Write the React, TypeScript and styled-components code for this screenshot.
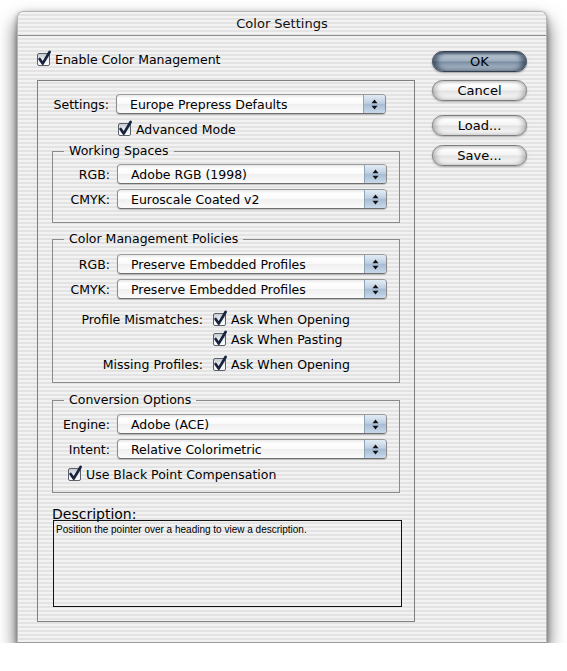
import React from 'react';
import styled, { createGlobalStyle, css } from 'styled-components';

const GlobalStyle = createGlobalStyle`
  html, body {
    margin: 0;
    background: #ffffff;
  }
  body {
    font-family: 'DejaVu Sans', 'Liberation Sans', sans-serif;
    font-size: 12.5px;
    color: #000;
  }
`;

const pinstripe = css`
  background: repeating-linear-gradient(
    to bottom,
    #f2f2f2 0px,
    #f2f2f2 2px,
    #e3e3e3 2px,
    #e3e3e3 4px
  );
`;

const Window = styled.div`
  margin: 11px 0 0 17px;
  width: 530px;
  height: 632px;
  box-sizing: border-box;
  border-radius: 6px 6px 0 0;
  border: 1px solid #b4b4b4;
  border-bottom-color: #9a9a9a;
  ${pinstripe}
  box-shadow: 0 10px 18px rgba(0, 0, 0, 0.7), 0 2px 5px rgba(0, 0, 0, 0.35);
  display: flex;
  flex-direction: column;
`;

const TitleBar = styled.div`
  height: 23px;
  flex: none;
  border-bottom: 1px solid #8e8e8e;
  display: flex;
  align-items: center;
  justify-content: center;
  font-size: 13px;
  color: #111;
`;

const Body = styled.div`
  display: flex;
  gap: 17px;
  padding: 15px 19px 0 19px;
`;

const LeftColumn = styled.div`
  width: 378px;
  display: flex;
  flex-direction: column;
`;

const ButtonColumn = styled.div`
  width: 95px;
  display: flex;
  flex-direction: column;
`;

const CheckRow = styled.label<{ $indent?: number; $top?: number }>`
  display: flex;
  align-items: center;
  gap: 4px;
  height: 14px;
  margin-left: ${p => p.$indent ?? 0}px;
  margin-top: ${p => p.$top ?? 0}px;
  white-space: nowrap;
`;

const MainBox = styled.div`
  margin-top: 14px;
  border: 1px solid #808080;
  padding: 13px 14px 14px 14px;
  display: flex;
  flex-direction: column;
`;

const FieldRow = styled.div`
  display: grid;
  grid-template-columns: 57px 270px;
  column-gap: 7px;
  align-items: center;
`;

const Label = styled.span`
  text-align: right;
  white-space: nowrap;
`;

const Group = styled.fieldset<{ $top: number; $bottom: number }>`
  margin: ${p => p.$top}px 0 0 0;
  padding: 0 0 ${p => p.$bottom}px 0;
  border: 1px solid #8a8a8a;
  min-width: 0;
`;

const Legend = styled.legend`
  margin-left: 11px;
  padding: 0 5px;
  line-height: 16px;
  font-size: 12.5px;
`;

const Stack = styled.div<{ $top: number; $gap: number }>`
  display: flex;
  flex-direction: column;
  gap: ${p => p.$gap}px;
  padding-top: ${p => p.$top}px;
`;

const Popup = styled.div`
  height: 20px;
  box-sizing: border-box;
  border: 1px solid #8c8c8c;
  border-top-color: #9a9a9a;
  border-bottom-color: #6e6e6e;
  border-radius: 4px;
  background: linear-gradient(
    to bottom,
    #e9e9e9 0%,
    #ffffff 20%,
    #fafafa 50%,
    #efefef 51%,
    #fbfbfb 100%
  );
  box-shadow: 0 1px 1px rgba(0, 0, 0, 0.2);
  display: flex;
  align-items: center;
  overflow: hidden;
`;

const PopupText = styled.span`
  flex: 1;
  padding-left: 13px;
  white-space: nowrap;
`;

const PopupArrow = styled.span`
  width: 21px;
  height: 100%;
  border-left: 1px solid #8ea2b8;
  background: linear-gradient(
    to bottom,
    #e3ecf5 0%,
    #bfd0e2 45%,
    #a7bdd5 52%,
    #c9d9ea 100%
  );
  display: flex;
  align-items: center;
  justify-content: center;
`;

const CheckGrid = styled.div<{ $top: number }>`
  display: grid;
  grid-template-columns: 150px auto;
  grid-auto-rows: 20px;
  column-gap: 10px;
  align-items: center;
  margin-top: ${p => p.$top}px;
`;

const DescLabel = styled.div`
  margin-top: 12px;
  font-size: 14px;
  line-height: 18px;
  height: 15px;
`;

const DescBox = styled.div`
  margin-left: 1px;
  width: 349px;
  height: 87px;
  box-sizing: border-box;
  border: 1px solid #111;
  padding: 3px 2px;
  font-family: 'Liberation Sans', 'DejaVu Sans', sans-serif;
  font-size: 10px;
  line-height: 12px;
`;

const PillButton = styled.div<{ $default?: boolean; $top: number }>`
  margin-top: ${p => p.$top}px;
  height: 21px;
  box-sizing: border-box;
  border-radius: 11px;
  display: flex;
  align-items: center;
  justify-content: center;
  font-size: 13px;
  border: 1px solid ${p => (p.$default ? '#333f4c' : '#7c7c7c')};
  background: ${p =>
    p.$default
      ? 'linear-gradient(to bottom, #75869a 0%, #bac6d3 18%, #9cacbd 48%, #7a8ca1 52%, #a9b9ca 85%, #cbd6e1 100%)'
      : 'linear-gradient(to bottom, #f4f4f4 0%, #ffffff 18%, #f2f2f2 48%, #e2e2e2 52%, #f4f4f4 85%, #ffffff 100%)'};
  box-shadow: ${p =>
    p.$default
      ? 'inset 4px 0 5px rgba(35,50,70,0.65), inset -4px 0 5px rgba(35,50,70,0.65), 0 1px 2px rgba(0,0,0,0.35)'
      : 'inset 3px 0 4px rgba(0,0,0,0.2), inset -3px 0 4px rgba(0,0,0,0.2), 0 1px 2px rgba(0,0,0,0.28)'};
`;

const CheckBox: React.FC = () => (
  <svg width="14" height="14" viewBox="0 0 14 14" style={{ overflow: 'visible', flex: 'none' }}>
    <defs>
      <linearGradient id="cbFill" x1="0" y1="0" x2="0" y2="1">
        <stop offset="0" stopColor="#c3c7ce" />
        <stop offset="0.5" stopColor="#eceef1" />
        <stop offset="1" stopColor="#ffffff" />
      </linearGradient>
    </defs>
    <rect x="0.5" y="1.5" width="12" height="12" rx="1.5" fill="url(#cbFill)" stroke="#5a616b" />
    <path
      d="M2.6 7 L5.7 11.6 L12.6 0"
      fill="none"
      stroke="#18233d"
      strokeWidth="2.7"
      strokeLinecap="round"
      strokeLinejoin="round"
    />
  </svg>
);

const Arrows: React.FC = () => (
  <svg width="7" height="11" viewBox="0 0 7 11">
    <path d="M3.5 0.5 L6.5 4.2 L0.5 4.2 Z" fill="#111" />
    <path d="M3.5 10.5 L6.5 6.8 L0.5 6.8 Z" fill="#111" />
  </svg>
);

const PopupMenu: React.FC<{ value: string }> = ({ value }) => (
  <Popup>
    <PopupText>{value}</PopupText>
    <PopupArrow>
      <Arrows />
    </PopupArrow>
  </Popup>
);

const Field: React.FC<{ label: string; value: string }> = ({ label, value }) => (
  <FieldRow>
    <Label>{label}</Label>
    <PopupMenu value={value} />
  </FieldRow>
);

const Check: React.FC<{ text: string; indent?: number; top?: number }> = ({ text, indent, top }) => (
  <CheckRow $indent={indent} $top={top}>
    <CheckBox />
    <span>{text}</span>
  </CheckRow>
);

export default function App() {
  return (
    <>
      <GlobalStyle />
      <Window>
        <TitleBar>Color Settings</TitleBar>
        <Body>
          <LeftColumn>
            <Check text="Enable Color Management" top={1} />
            <MainBox>
              <Field label="Settings:" value="Europe Prepress Defaults" />
              <Check text="Advanced Mode" indent={66} top={8} />

              <Group $top={7} $bottom={13}>
                <Legend>Working Spaces</Legend>
                <Stack $top={5} $gap={5}>
                  <Field label="RGB:" value="Adobe RGB (1998)" />
                  <Field label="CMYK:" value="Euroscale Coated v2" />
                </Stack>
              </Group>

              <Group $top={8} $bottom={8}>
                <Legend>Color Management Policies</Legend>
                <Stack $top={7} $gap={5}>
                  <Field label="RGB:" value="Preserve Embedded Profiles" />
                  <Field label="CMYK:" value="Preserve Embedded Profiles" />
                </Stack>
                <CheckGrid $top={10}>
                  <Label>Profile Mismatches:</Label>
                  <Check text="Ask When Opening" />
                  <span />
                  <Check text="Ask When Pasting" />
                </CheckGrid>
                <CheckGrid $top={5}>
                  <Label>Missing Profiles:</Label>
                  <Check text="Ask When Opening" />
                </CheckGrid>
              </Group>

              <Group $top={9} $bottom={11}>
                <Legend>Conversion Options</Legend>
                <Stack $top={6} $gap={5}>
                  <Field label="Engine:" value="Adobe (ACE)" />
                  <Field label="Intent:" value="Relative Colorimetric" />
                </Stack>
                <Check text="Use Black Point Compensation" indent={15} top={8} />
              </Group>

              <DescLabel>Description:</DescLabel>
              <DescBox>Position the pointer over a heading to view a description.</DescBox>
            </MainBox>
          </LeftColumn>

          <ButtonColumn>
            <PillButton $default $top={0}>OK</PillButton>
            <PillButton $top={8}>Cancel</PillButton>
            <PillButton $top={14}>Load...</PillButton>
            <PillButton $top={9}>Save...</PillButton>
          </ButtonColumn>
        </Body>
      </Window>
    </>
  );
}
